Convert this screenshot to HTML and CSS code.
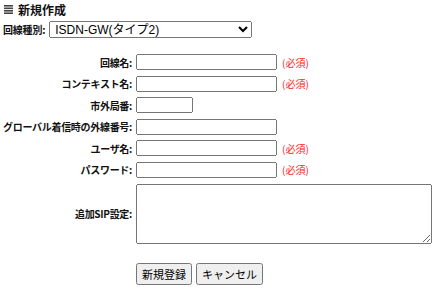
FILE: index.html
```html
<!DOCTYPE html>
<html lang="ja">
<head>
  <meta charset="UTF-8">
  <title>新規作成</title>
  <link rel="stylesheet" href="styles.css">
</head>
<body>
  <div class="page">
    <h1 class="title">
      <svg class="title-icon" width="9" height="9" viewBox="0 0 9 9">
        <rect x="0" y="0" width="9" height="1.6" fill="#444"/>
        <rect x="0" y="2.5" width="9" height="1.6" fill="#444"/>
        <rect x="0" y="5" width="9" height="1.6" fill="#444"/>
        <rect x="0" y="7.4" width="9" height="1.6" fill="#444"/>
      </svg>
      新規作成
    </h1>

    <div class="type-row">
      <label class="type-label" for="lineType">回線種別:</label>
      <select id="lineType" class="type-select">
        <option>ISDN-GW(タイプ2)</option>
      </select>
    </div>

    <div class="form">
      <label class="label">回線名:</label>
      <div class="field"><input type="text" class="text"><span class="req">(必須)</span></div>

      <label class="label">コンテキスト名:</label>
      <div class="field"><input type="text" class="text"><span class="req">(必須)</span></div>

      <label class="label">市外局番:</label>
      <div class="field"><input type="text" class="text short"></div>

      <label class="label">グローバル着信時の外線番号:</label>
      <div class="field"><input type="text" class="text"></div>

      <label class="label">ユーザ名:</label>
      <div class="field"><input type="text" class="text"><span class="req">(必須)</span></div>

      <label class="label">パスワード:</label>
      <div class="field"><input type="password" class="text"><span class="req">(必須)</span></div>

      <label class="label">追加SIP設定:</label>
      <div class="field"><textarea class="sip"></textarea></div>

      <div></div>
      <div class="buttons">
        <button class="btn">新規登録</button>
        <button class="btn">キャンセル</button>
      </div>
    </div>
  </div>
</body>
</html>
```

FILE: styles.css
```css
* {
  box-sizing: border-box;
}

body {
  margin: 0;
  background: #fff;
  color: #111;
  font-family: "Noto Sans CJK JP", "Liberation Sans", sans-serif;
}

.page {
  padding: 2px 3px;
}

.title {
  margin: 0;
  display: flex;
  align-items: center;
  gap: 5px;
  padding-left: 1px;
  font-size: 12px;
  line-height: 15px;
  font-weight: bold;
}

.type-row {
  margin-top: 4px;
  display: flex;
  align-items: center;
  gap: 4px;
}

.type-label {
  font-size: 10px;
  letter-spacing: -0.2px;
  font-weight: bold;
}

.type-select {
  width: 203px;
  height: 17px;
  padding: 0 0 0 1px;
  font-family: "Liberation Sans", "Noto Sans CJK JP", sans-serif;
  font-size: 12px;
  line-height: 14px;
  color: #000;
}

.form {
  margin-top: 16px;
  display: grid;
  grid-template-columns: 129px 1fr;
  column-gap: 4px;
  row-gap: 5.6px;
  align-items: center;
}

.label {
  text-align: right;
  font-size: 10px;
  letter-spacing: -0.3px;
  font-weight: bold;
  white-space: nowrap;
}

.field {
  display: flex;
  align-items: center;
  gap: 5px;
}

.text {
  width: 141px;
  height: 16px;
  padding: 0 2px;
  font-size: 11px;
}

.short {
  width: 57px;
}

.req {
  color: #f22;
  font-size: 10px;
}

.sip {
  width: 296px;
  height: 60px;
  display: block;
}

.buttons {
  margin-top: 14px;
  display: flex;
  gap: 4px;
}

.btn {
  height: 22px;
  padding: 0 4px;
  font-family: inherit;
  font-size: 11px;
  color: #000;
}
```
